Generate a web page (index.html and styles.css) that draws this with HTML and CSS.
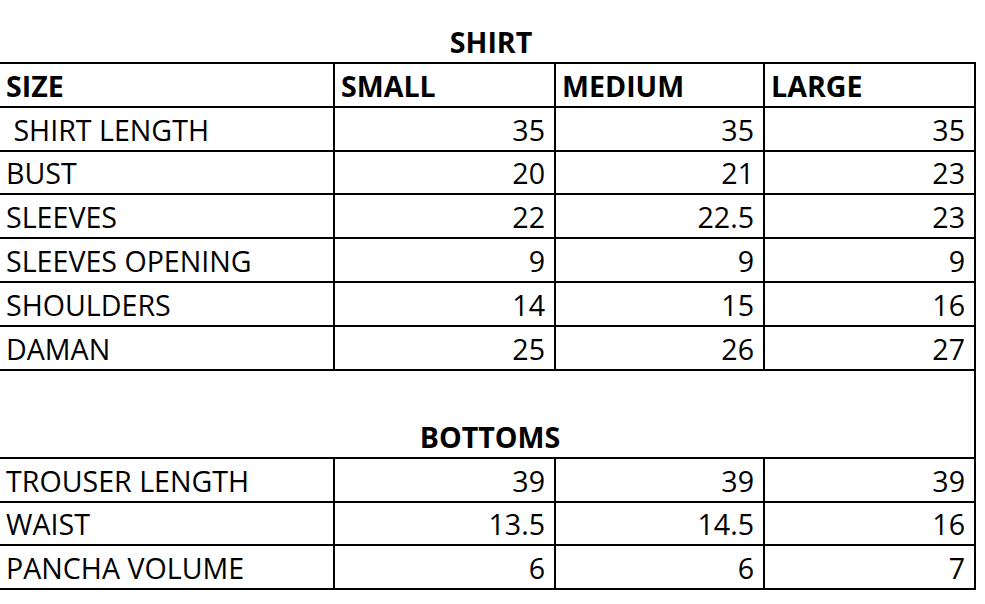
FILE: index.html
```html
<!DOCTYPE html>
<html lang="en">
<head>
<meta charset="utf-8">
<title>Size Chart</title>
<link rel="stylesheet" href="styles.css">
</head>
<body>
<table class="chart">
  <colgroup>
    <col class="c1"><col class="c2"><col class="c3"><col class="c4">
  </colgroup>
  <tbody>
    <tr class="title-row"><td colspan="4" class="title">SHIRT</td></tr>
    <tr class="head-row">
      <th class="lbl">SIZE</th><th class="lbl">SMALL</th><th class="lbl">MEDIUM</th><th class="lbl">LARGE</th>
    </tr>
    <tr><td class="lbl">&nbsp;SHIRT LENGTH</td><td class="num">35</td><td class="num">35</td><td class="num">35</td></tr>
    <tr class="short"><td class="lbl">BUST</td><td class="num">20</td><td class="num">21</td><td class="num">23</td></tr>
    <tr><td class="lbl">SLEEVES</td><td class="num">22</td><td class="num">22.5</td><td class="num">23</td></tr>
    <tr><td class="lbl">SLEEVES OPENING</td><td class="num">9</td><td class="num">9</td><td class="num">9</td></tr>
    <tr><td class="lbl">SHOULDERS</td><td class="num">14</td><td class="num">15</td><td class="num">16</td></tr>
    <tr><td class="lbl">DAMAN</td><td class="num">25</td><td class="num">26</td><td class="num">27</td></tr>
    <tr class="gap-row"><td colspan="4" class="gap"></td></tr>
    <tr class="section-row"><td colspan="4" class="section">BOTTOMS</td></tr>
    <tr><td class="lbl">TROUSER LENGTH</td><td class="num">39</td><td class="num">39</td><td class="num">39</td></tr>
    <tr class="short"><td class="lbl">WAIST</td><td class="num">13.5</td><td class="num">14.5</td><td class="num">16</td></tr>
    <tr><td class="lbl">PANCHA VOLUME</td><td class="num">6</td><td class="num">6</td><td class="num">7</td></tr>
  </tbody>
</table>
</body>
</html>
```
FILE: styles.css
```css
html, body {
  margin: 0;
  padding: 0;
  background: #ffffff;
}

body {
  font-family: "Open Sans", "Liberation Sans", sans-serif;
  font-size: 28.6px;
  color: #000000;
}

.chart {
  border-collapse: separate;
  border-spacing: 0;
  table-layout: fixed;
  width: 976px;
  margin-top: 18px;
}

.c1 { width: 335px; }
.c2 { width: 221px; }
.c3 { width: 209px; }
.c4 { width: 211px; }

.chart td,
.chart th {
  box-sizing: border-box;
  height: 44px;
  padding: 0 9px 1px 6px;
  line-height: 38px;
  vertical-align: bottom;
  white-space: nowrap;
  border-right: 2px solid #000;
  border-bottom: 2px solid #000;
  font-weight: 400;
}

.chart tr.short td { height: 43px; }

.chart th {
  font-weight: 700;
  text-align: left;
  border-top: 2px solid #000;
  height: 46px;
}

.chart td.lbl { text-align: left; }
.chart td.num { text-align: right; }

.chart td.title {
  border: none;
  font-weight: 700;
  text-align: center;
  padding: 0 0 1px 6px;
}

.chart td.gap {
  border-bottom: none;
}

.chart td.section {
  font-weight: 700;
  text-align: center;
  padding: 0 0 1px 6px;
}
```
